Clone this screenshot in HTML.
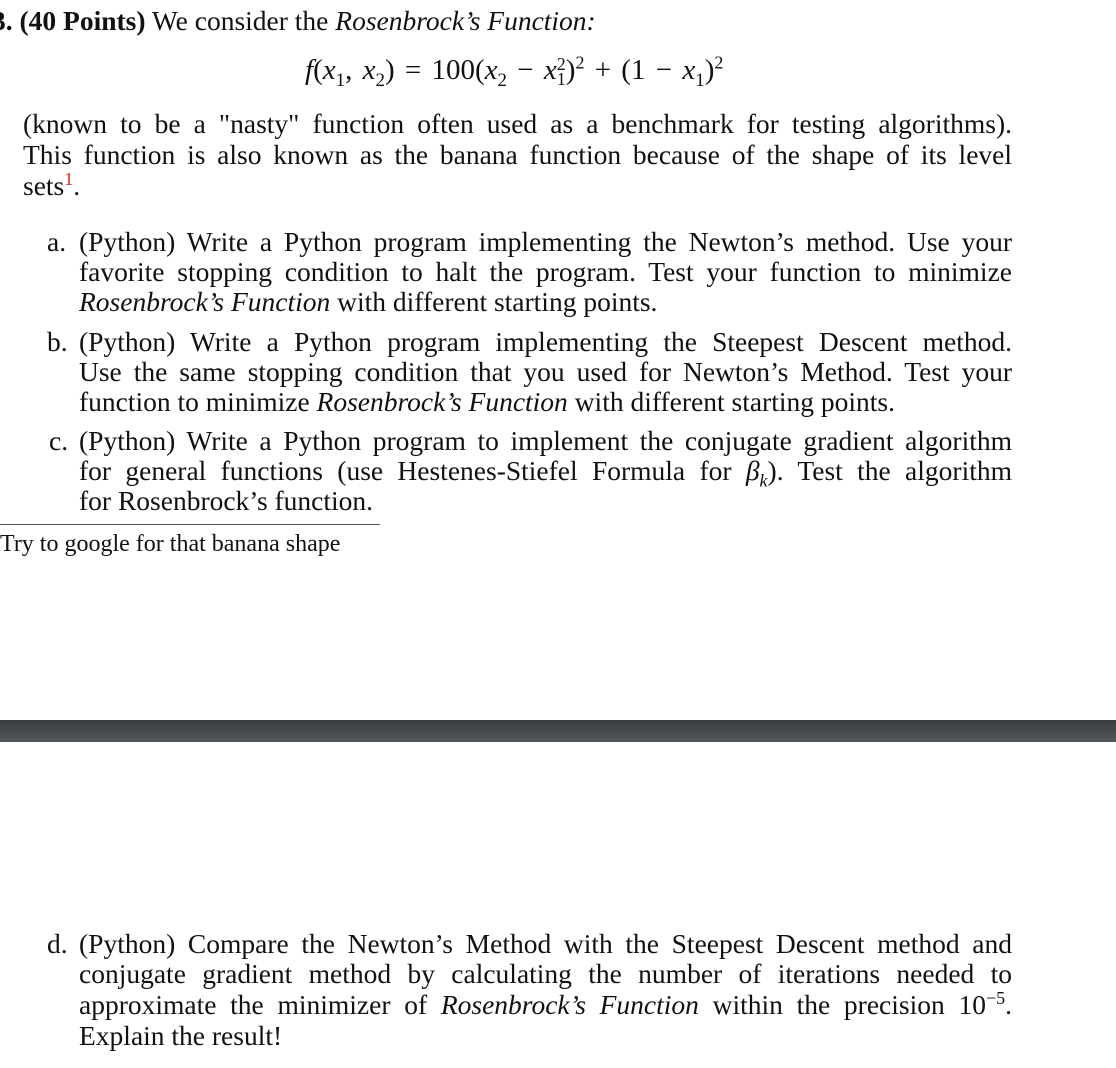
<!DOCTYPE html>
<html><head><meta charset="utf-8"><style>
body{margin:0;width:1116px;height:1068px;background:#fff;position:relative;overflow:hidden;font-family:"Liberation Serif",serif;color:#111;}
.l{position:absolute;font-size:27.5px;line-height:30px;white-space:nowrap;}
.j{text-align:justify;text-align-last:justify;white-space:normal;}
i{font-style:italic}
sup{font-size:18px;line-height:0}
.m{font-style:italic}
</style></head><body>
<div class="l" style="left:-8px;top:6px"><b>3. (40 Points)</b> We consider the <i>Rosenbrock’s Function:</i></div>
<div class="l" style="left:305px;top:55px;font-size:29px;word-spacing:3px"><span class="m">f</span>(<span class="m">x</span><sub style="font-size:19px">1</sub>, <span class="m">x</span><sub style="font-size:19px">2</sub>) = 100(<span class="m">x</span><sub style="font-size:19px">2</sub> − <span class="m">x</span><span style="display:inline-block;vertical-align:middle;line-height:15px;font-size:18px;text-align:left"><span style="display:block">2</span><span style="display:block">1</span></span>)<sup>2</sup> + (1 − <span class="m">x</span><sub style="font-size:19px">1</sub>)<sup>2</sup></div>
<div class="l j" style="left:23px;top:109px;width:989px">(known to be a "nasty" function often used as a benchmark for testing algorithms).</div>
<div class="l j" style="left:23px;top:140px;width:989px">This function is also known as the banana function because of the shape of its level</div>
<div class="l" style="left:23px;top:171px">sets<sup style="color:#e02020">1</sup>.</div>

<div class="l" style="left:47px;top:227px">a.</div>
<div class="l j" style="left:79px;top:227px;width:933px">(Python) Write a Python program implementing the Newton’s method. Use your</div>
<div class="l j" style="left:79px;top:257px;width:933px">favorite stopping condition to halt the program. Test your function to minimize</div>
<div class="l" style="left:79px;top:287px"><i>Rosenbrock’s Function</i> with different starting points.</div>

<div class="l" style="left:47px;top:327px">b.</div>
<div class="l j" style="left:79px;top:327px;width:933px">(Python) Write a Python program implementing the Steepest Descent method.</div>
<div class="l j" style="left:79px;top:357px;width:933px">Use the same stopping condition that you used for Newton’s Method. Test your</div>
<div class="l" style="left:79px;top:387px">function to minimize <i>Rosenbrock’s Function</i> with different starting points.</div>

<div class="l" style="left:49px;top:426px">c.</div>
<div class="l j" style="left:79px;top:426px;width:933px">(Python) Write a Python program to implement the conjugate gradient algorithm</div>
<div class="l j" style="left:79px;top:456px;width:933px">for general functions (use Hestenes-Stiefel Formula for <i>β<sub style="font-size:18px">k</sub></i>). Test the algorithm</div>
<div class="l" style="left:79px;top:486px">for Rosenbrock’s function.</div>

<div style="position:absolute;left:0;top:524px;width:380px;height:1px;background:#555"></div>
<div class="l" style="left:0;top:531px;font-size:24px;line-height:26px">Try to google for that banana shape</div>

<div style="position:absolute;left:0;top:720px;width:1116px;height:22px;background:linear-gradient(#3a3d40,#55585b)"></div>

<div class="l" style="left:47px;top:929px">d.</div>
<div class="l j" style="left:79px;top:929px;width:933px">(Python) Compare the Newton’s Method with the Steepest Descent method and</div>
<div class="l j" style="left:79px;top:959px;width:933px">conjugate gradient method by calculating the number of iterations needed to</div>
<div class="l j" style="left:79px;top:990px;width:933px">approximate the minimizer of <i>Rosenbrock’s Function</i> within the precision 10<sup>−5</sup>.</div>
<div class="l" style="left:79px;top:1021px">Explain the result!</div>
</body></html>
